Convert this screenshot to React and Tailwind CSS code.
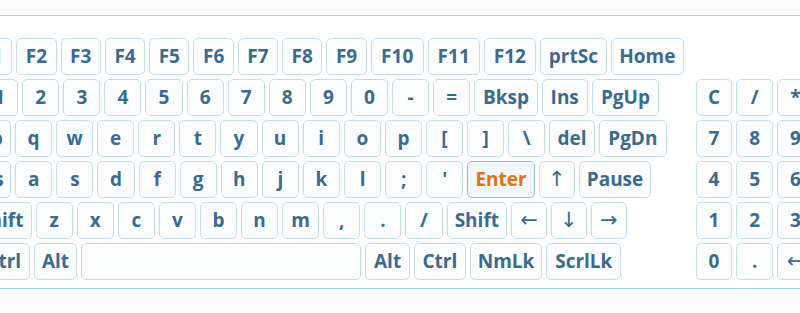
const W = 37.1;

// [label, width, kind, leftMargin]
const main = [
  [["Esc", 28], ["F1", 40.3], ["F2", 40.3], ["F3", 40.3], ["F4", 40.3], ["F5", 40.3], ["F6", 40.3], ["F7", 40.3], ["F8", 40.3], ["F9", 40.3], ["F10", 53], ["F11", 52], ["F12", 52.4], ["prtSc", 66.6], ["Home", 73.4]],
  [["`"], ["1"], ["2"], ["3"], ["4"], ["5"], ["6"], ["7"], ["8"], ["9"], ["0"], ["-"], ["="], ["Bksp", 63.5], ["Ins", 46], ["PgUp", 67.4]],
  [["Tab", 51, null, 20], ["q"], ["w"], ["e"], ["r"], ["t"], ["y"], ["u"], ["i"], ["o"], ["p"], ["["], ["]"], ["\\"], ["del", 45.6], ["PgDn", 68]],
  [["Caps", 60, null, 11.3], ["a"], ["s"], ["d"], ["f"], ["g"], ["h"], ["j"], ["k"], ["l"], [";"], ["'"], ["Enter", 67.4, "enter"], ["↑", 36, "arrow"], ["Pause", 72.6]],
  [["Shift", 60.6, null, 31], ["z"], ["x"], ["c"], ["v"], ["b"], ["n"], ["m"], [","], ["."], ["/"], ["Shift", 60.6], ["←", 35.7, "arrow"], ["↓", 36, "arrow"], ["→", 36, "arrow"]],
  [["Ctrl", 52, null, 37.7], ["Alt", 43.6], ["", 280], ["Alt", 44.6], ["Ctrl", 52], ["NmLk", 72.4], ["ScrlLk", 75]],
];

const numpad = [
  ["C", "/", "*", "-"],
  ["7", "8", "9", "+"],
  ["4", "5", "6", ""],
  ["1", "2", "3", ""],
  ["0", ".", "←", ""],
];

function Key({ label, width = W, kind, ml = 0 }) {
  const base =
    "shrink-0 h-[37px] flex items-center justify-center rounded-[5px] border text-[19px] font-bold leading-none";
  let look = "border-[#c6dcee] bg-[#fcfdfe] text-[#3a6a8e]";
  if (kind === "enter") look = "border-[#8fbde6] bg-[#f1f6fb] text-[#e2720e]";
  return (
    <div className={`${base} ${look}`} style={{ width, marginLeft: ml }}>
      {kind === "arrow" ? (
        <span className="font-['DejaVu_Sans',sans-serif] font-normal text-[21px]">{label}</span>
      ) : (
        label
      )}
    </div>
  );
}

export default function App() {
  return (
    <div className="min-h-screen bg-[#fafafa] pt-[15px] font-['Open_Sans',sans-serif]">
      <div className="border-y border-[#abcbe3] bg-white overflow-hidden pt-[22px] pb-[8px]">
        <div className="flex -ml-[60px]">
          {/* main block */}
          <div className="flex flex-col gap-[4.1px] w-[746px] shrink-0">
            {main.map((row, i) => (
              <div key={i} className="flex gap-[4px]">
                {row.map(([label, width, kind, ml], j) => (
                  <Key key={j} label={label} width={width} kind={kind} ml={ml} />
                ))}
              </div>
            ))}
          </div>

          {/* numpad */}
          <div className="flex flex-col gap-[4.1px] ml-[9.7px] mt-[41.1px] shrink-0">
            {numpad.map((row, i) => (
              <div key={i} className="flex gap-[4.2px]">
                {row.map((label, j) => (
                  <Key key={j} label={label} width={36.6} kind={label === "←" ? "arrow" : undefined} />
                ))}
              </div>
            ))}
          </div>
        </div>
      </div>
    </div>
  );
}
